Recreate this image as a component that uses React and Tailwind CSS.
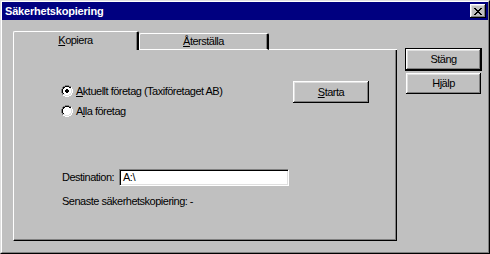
const bevel =
    'shadow-[inset_-1px_-1px_#000,inset_1px_1px_#fff,inset_-2px_-2px_#808080,inset_2px_2px_#dfdfdf]';

function Radio({ checked }) {
    return (
        <svg width="12" height="12" viewBox="0 0 12 12" shapeRendering="crispEdges">
            <path d="M4 0h4v1H4zM2 1h2v1H2zM8 1h2v1H8zM1 2h1v2H1zM0 4h1v4H0zM1 8h1v2H1z" fill="#808080" />
            <path d="M10 2h1v2h-1zM11 4h1v4h-1zM10 8h1v2h-1zM8 10h2v1H8zM2 10h2v1H2zM4 11h4v1H4z" fill="#fff" />
            <path d="M4 1h4v1H4zM2 2h2v1H2zM8 2h2v1H8zM2 3h1v1H2zM1 4h1v4H1zM2 8h1v1H2z" fill="#000" />
            <path d="M9 3h1v1H9zM10 4h1v4h-1zM9 8h1v1H9zM8 9h2v1H8zM2 9h2v1H2zM4 10h4v1H4z" fill="#dfdfdf" />
            <path d="M4 2h4v1h1v1h1v4H9v1H8v1H4V9H3V8H2V4h1V3h1z" fill="#fff" />
            {checked && <path d="M5 4h2v1h1v2H7v1H5V7H4V5h1z" fill="#000" />}
        </svg>
    );
}

function Button({ children, def, className = '' }) {
    return (
        <div className={`${def ? 'border border-black' : ''} ${className}`}>
            <div className={`h-full flex items-center justify-center bg-[#c0c0c0] ${bevel}`}>{children}</div>
        </div>
    );
}

export default function App() {
    return (
        <div className="w-[490px] h-[254px] bg-[#c0c0c0] border border-t-[#dfdfdf] border-l-[#dfdfdf] border-r-black border-b-black font-['Liberation_Sans',Arial,sans-serif] text-[11px] leading-[13px] tracking-[-0.5px] text-black">
            <div className="h-full border border-t-white border-l-white border-r-[#808080] border-b-[#808080] flex flex-col">
                <div className="h-[18px] bg-[#000080] flex items-center justify-between pl-[3px] pr-[2px]">
                    <span className="text-white font-bold tracking-[-0.2px]">Säkerhetskopiering</span>
                    <div className={`w-[16px] h-[14px] bg-[#c0c0c0] flex items-center justify-center ${bevel}`}>
                        <svg width="8" height="7" viewBox="0 0 8 7" shapeRendering="crispEdges">
                            <path d="M0 0h2v1h1v1h2V1h1V0h2v1H7v1H6v1H5v1h1v1h1v1h1v1H6V6H5V5H3v1H2v1H0V6h1V5h1V4h1V3H2V2H1V1H0z" fill="#000" />
                        </svg>
                    </div>
                </div>

                <div className="flex pt-[11px] pl-[11px]">
                    <div className="w-[384px] flex flex-col">
                        <div className="flex items-end h-[19px]">
                            <div className="w-[126px] h-[19px] border-l border-t border-white rounded-tl-[2px] rounded-tr-[2px] border-r-2 border-r-black shadow-[inset_-1px_0_#808080] flex items-center justify-center pb-[2px]">
                                <span><span className="underline">K</span>opiera</span>
                            </div>
                            <div className="w-[130px] h-[17px] border-l border-t border-white rounded-tl-[2px] rounded-tr-[2px] border-r-2 border-r-black border-b border-b-white shadow-[inset_-1px_0_#808080] flex items-center justify-center">
                                <span><span className="underline">Å</span>terställa</span>
                            </div>
                            <div className="flex-1 h-[1px] bg-white" />
                        </div>
                        <div className="h-[191px] border-l border-l-white border-r border-r-black border-b border-b-black shadow-[inset_-1px_-1px_#808080] flex flex-col">
                            <div className="flex pt-[31px] pl-[47px]">
                                <div className="w-[232px] flex flex-col">
                                    <div className="h-[20px] flex items-center gap-[3px]">
                                        <Radio checked />
                                        <span><span className="underline">A</span>ktuellt företag (Taxiföretaget AB)</span>
                                    </div>
                                    <div className="h-[20px] flex items-center gap-[3px]">
                                        <Radio />
                                        <span>A<span className="underline">l</span>la företag</span>
                                    </div>
                                </div>
                                <Button className="w-[76px] h-[22px]">
                                    <span><span className="underline">S</span>tarta</span>
                                </Button>
                            </div>
                            <div className="flex items-center pl-[48px] mt-[48px]">
                                <span className="w-[57px]">Destination:</span>
                                <div className="w-[170px] h-[17px] bg-white border border-t-[#808080] border-l-[#808080] border-r-white border-b-white shadow-[inset_1px_1px_#000,inset_-1px_-1px_#dfdfdf] flex items-center pl-[3px]">
                                    A:\
                                </div>
                            </div>
                            <div className="pl-[48px] mt-[9px]">Senaste säkerhetskopiering: -</div>
                        </div>
                    </div>

                    <div className="ml-[8px] mt-[17px] flex flex-col">
                        <Button def className="w-[77px] h-[23px]">Stäng</Button>
                        <Button className="w-[75px] h-[21px] ml-[1px] mt-[2px]">Hjälp</Button>
                    </div>
                </div>
            </div>
        </div>
    );
}
